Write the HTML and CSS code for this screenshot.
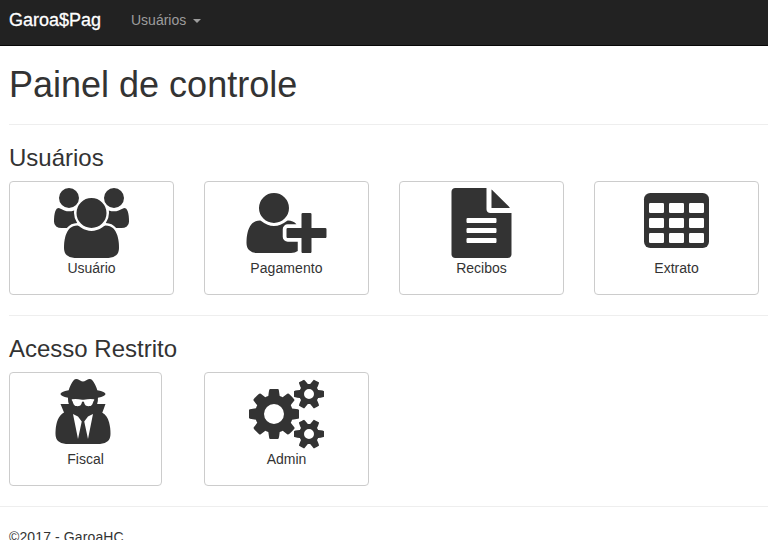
FILE: index.html
```html
<!DOCTYPE html>
<html lang="pt-BR">
<head>
<meta charset="utf-8">
<title>Garoa$Pag</title>
<link rel="stylesheet" href="styles.css">
</head>
<body>
<nav class="navbar">
  <a class="brand">Garoa$Pag</a>
  <a class="nav-link">Usuários <span class="caret"></span></a>
</nav>
<main class="content">
  <h1>Painel de controle</h1>
  <hr>
  <h3>Usuários</h3>
  <div class="tiles">
    <a class="tile">
      <svg class="icon" width="75" height="70" viewBox="0 0 1920 1792"><path d="M593 896q-162 5-265 128h-134q-82 0-138-40.500t-56-118.500q0-353 124-353 6 0 43.500 21t97.500 42.500 119 21.500q67 0 133-23-5 37-5 66 0 139 81 256zm1071 637q0 120-73 189.500t-194 69.500h-874q-121 0-194-69.500t-73-189.500q0-53 3.500-103.500t14-109 26.500-108.500 43-97.500 62-81 85.500-53.500 111.500-20q10 0 43 21.500t73 48 107 48 135 21.500 135-21.500 107-48 73-48 43-21.500q61 0 111.500 20t85.500 53.500 62 81 43 97.500 26.500 108.500 14 109 3.500 103.500zm-1024-1277q0 106-75 181t-181 75-181-75-75-181 75-181 181-75 181 75 75 181zm704 384q0 159-112.500 271.500t-271.500 112.500-271.500-112.500-112.500-271.500 112.500-271.500 271.500-112.500 271.500 112.500 112.500 271.500zm576 225q0 78-56 118.500t-138 40.500h-134q-103-123-265-128 81-117 81-256 0-29-5-66 66 23 133 23 59 0 119-21.500t97.500-42.500 43.500-21q124 0 124 353zm-128-609q0 106-75 181t-181 75-181-75-75-181 75-181 181-75 181 75 75 181z"/></svg>
      <span>Usuário</span>
    </a>
    <a class="tile">
      <svg class="icon" width="80" height="70" viewBox="13 0 2048 1792"><path d="M704 896q-159 0-271.500-112.500t-112.500-271.500 112.500-271.500 271.500-112.500 271.500 112.500 112.500 271.500-112.500 271.500-271.500 112.500zm960 128h352q13 0 22.500 9.500t9.500 22.500v192q0 13-9.500 22.500t-22.500 9.500h-352v352q0 13-9.500 22.500t-22.500 9.500h-192q-13 0-22.500-9.500t-9.500-22.500v-352h-352q-13 0-22.500-9.500t-9.500-22.500v-192q0-13 9.500-22.500t22.500-9.500h352v-352q0-13 9.500-22.500t22.500-9.500h192q13 0 22.500 9.500t9.500 22.500v352zm-736 224q0 52 38 90t90 38h256v238q-68 50-171 50h-874q-121 0-194-69t-73-190q0-53 3.500-103.500t14-109 26.500-108.500 43-97.500 62-81 85.500-53.500 111.500-20q19 0 39 17 79 61 154.500 91.500t164.500 30.500 164.500-30.500 154.500-91.500q20-17 39-17 132 0 217 96h-223q-52 0-90 38t-38 90v192z"/></svg>
      <span class="label-wide">Pagamento</span>
    </a>
    <a class="tile">
      <svg class="icon" width="60" height="70" viewBox="13 0 1536 1792"><path fill-rule="evenodd" d="M1468 476q14 14 28 36h-472v-472q22 14 36 28zM992 640h544v1056q0 40-28 68t-68 28h-1344q-40 0-68-28t-28-68v-1600q0-40 28-68t68-28h800v544q0 40 28 68t68 28zM1152 864v-64q0-14-9-23t-23-9h-704q-14 0-23 9t-9 23v64q0 14 9 23t23 9h704q14 0 23-9t9-23zm0 256v-64q0-14-9-23t-23-9h-704q-14 0-23 9t-9 23v64q0 14 9 23t23 9h704q14 0 23-9t9-23zm0 256v-64q0-14-9-23t-23-9h-704q-14 0-23 9t-9 23v64q0 14 9 23t23 9h704q14 0 23-9t9-23z"/></svg>
      <span>Recibos</span>
    </a>
    <a class="tile">
      <svg class="icon" width="65" height="70" viewBox="0 0 1664 1792"><rect y="128" width="1664" height="1408" rx="160"/><g class="cells"><rect x="128" y="384" width="384" height="256" rx="32"/><rect x="640" y="384" width="384" height="256" rx="32"/><rect x="1152" y="384" width="384" height="256" rx="32"/><rect x="128" y="768" width="384" height="256" rx="32"/><rect x="640" y="768" width="384" height="256" rx="32"/><rect x="1152" y="768" width="384" height="256" rx="32"/><rect x="128" y="1152" width="384" height="256" rx="32"/><rect x="640" y="1152" width="384" height="256" rx="32"/><rect x="1152" y="1152" width="384" height="256" rx="32"/></g></svg>
      <span>Extrato</span>
    </a>
  </div>
  <hr>
  <h3>Acesso Restrito</h3>
  <div class="tiles">
    <a class="tile tile-narrow">
      <svg class="icon" width="60" height="70" viewBox="13 0 1536 1792"><path d="M576 1536l96-448-96-128-128-64zm256 0l128-640-128 64-96 128zm160-1010q-2-4-4-6-10-8-96-8-70 0-167 19-7 2-21 2t-21-2q-97-19-167-19-86 0-96 8-2 2-4 6 2 18 4 27 2 3 7.500 6.500t7.500 10.500q2 4 7.500 20.500t7 20.500 7.500 17 8.500 17 9 14 12 13.500 14 9.500 17.500 8 20.500 4 24.500 2q36 0 59-12.500t32.500-30 14.500-34.500 11.500-29.500 17.500-12.500h12q11 0 17.500 12.500t11.500 29.500 14.500 34.500 32.500 30 59 12.500q13 0 24.500-2t20.500-4 17.500-8 14-9.500 12-13.500 9-14 8.500-17 7.500-17 7-20.500 7.500-20.500q2-7 7.500-10.500t7.500-6.500q2-9 4-27zm416 879q0 121-73 190t-194 69h-874q-121 0-194-69t-73-190q0-61 4.500-118t19-125.500 37.500-123.500 63.500-103.500 93.500-74.500l-90-220h214q-22-64-22-128 0-12 2-32-194-40-194-96 0-57 210-99 17-62 51.500-134t70.500-114q32-37 76-37 30 0 84 31t84 31 84-31 84-31q44 0 76 37 36 42 70.500 114t51.500 134q210 42 210 99 0 56-194 96 7 81-20 160h214l-82 225q63 33 107.500 96.500t65.500 143.500 29 151.500 8 148.500z"/></svg>
      <span>Fiscal</span>
    </a>
    <a class="tile">
      <svg class="icon" width="75" height="70" viewBox="0 0 1920 1792"><path d="M896 896q0-106-75-181t-181-75-181 75-75 181 75 181 181 75 181-75 75-181zm768 512q0-52-38-90t-90-38-90 38-38 90q0 53 37.500 90.500t90.500 37.500 90.500-37.500 37.500-90.500zm0-1024q0-52-38-90t-90-38-90 38-38 90q0 53 37.500 90.500t90.500 37.500 90.500-37.500 37.500-90.500zm-384 421v185q0 10-7 19.500t-16 10.500l-155 24q-11 35-32 76 34 48 90 115 7 11 7 20 0 12-7 19-23 30-82.500 89.500t-78.500 59.500q-11 0-21-7l-115-90q-37 19-77 31-11 108-23 155-7 24-30 24h-186q-11 0-20-7.500t-10-17.500l-23-153q-34-10-75-31l-118 89q-7 7-20 7-11 0-21-8-144-133-144-160 0-9 7-19 10-14 41-53t47-61q-23-44-35-82l-152-24q-10-1-17-9.500t-7-19.500v-185q0-10 7-19.500t16-10.500l155-24q11-35 32-76-34-48-90-115-7-11-7-20 0-12 7-20 22-30 82-89t79-59q11 0 21 7l115 90q34-18 77-32 11-108 23-154 7-24 30-24h186q11 0 20 7.500t10 17.500l23 153q34 10 75 31l118-89q8-7 20-7 11 0 21 8 144 133 144 160 0 8-7 19-12 16-42 54t-45 60q23 48 34 82l152 23q10 2 17 10.500t7 19.500zm640 533v140q0 16-149 31-12 27-30 52 51 113 51 138 0 4-4 7-122 71-124 71-8 0-46-47t-52-68q-20 2-30 2t-30-2q-14 21-52 68t-46 47q-2 0-124-71-4-3-4-7 0-25 51-138-18-25-30-52-149-15-149-31v-140q0-16 149-31 13-29 30-52-51-113-51-138 0-4 4-7 4-2 35-20t59-34 30-16q8 0 46 46.500t52 67.500q20-2 30-2t30 2q51-71 92-112l6-2q4 0 124 70 4 3 4 7 0 25-51 138 17 23 30 52 149 15 149 31zm0-1024v140q0 16-149 31-12 27-30 52 51 113 51 138 0 4-4 7-122 71-124 71-8 0-46-47t-52-68q-20 2-30 2t-30-2q-14 21-52 68t-46 47q-2 0-124-71-4-3-4-7 0-25 51-138-18-25-30-52-149-15-149-31v-140q0-16 149-31 13-29 30-52-51-113-51-138 0-4 4-7 4-2 35-20t59-34 30-16q8 0 46 46.500t52 67.500q20-2 30-2t30 2q51-71 92-112l6-2q4 0 124 70 4 3 4 7 0 25-51 138 17 23 30 52 149 15 149 31z"/></svg>
      <span>Admin</span>
    </a>
  </div>
</main>
<footer class="footer">©2017 - GaroaHC</footer>
</body>
</html>
```
FILE: styles.css
```css
* { box-sizing: border-box; }
html { overflow: hidden; height: 540px; }
body {
  margin: 0;
  height: 540px;
  overflow: hidden;
  background: #fff;
  color: #333;
  font: 14px/20px "Liberation Sans", Arial, sans-serif;
}
.navbar {
  display: flex;
  align-items: flex-start;
  gap: 30px;
  height: 46px;
  padding: 10px 9px 0;
  background: #222;
  border-bottom: 1px solid #080808;
}
.brand {
  width: 92px;
  color: #fff;
  font-size: 18px;
  -webkit-text-stroke: 0.3px #fff;
}
.nav-link { display: flex; align-items: center; gap: 7px; color: #9d9d9d; }
.caret {
  margin-top: 2px;
  border-top: 4px solid #9d9d9d;
  border-left: 4px solid transparent;
  border-right: 4px solid transparent;
}
.content { padding: 19px 0 0 9px; }
h1, h3 { margin: 0; font-weight: normal; line-height: 1.1; }
h1 { font-size: 36px; height: 40px; }
h3 { height: 26px; margin-bottom: 10px; font-size: 24px; }
hr { height: 1px; margin: 20px 0; border: 0; background: #eee; }
h1 + hr { margin-top: 19px; }
.tiles { display: flex; gap: 30px; }
.tile {
  display: flex;
  flex-direction: column;
  align-items: center;
  width: 165px;
  height: 114px;
  padding-top: 6px;
  border: 1px solid #ccc;
  border-radius: 4px;
}
.tile-narrow { width: 153px; margin-right: 12px; }
.icon { display: block; overflow: visible; fill: #333; }
.cells { fill: #fff; }
.label-wide { letter-spacing: 0.1px; }
.footer {
  margin-top: 20px;
  padding: 20px 9px 0;
  border-top: 1px solid #eee;
  letter-spacing: 0.12px;
}
```
